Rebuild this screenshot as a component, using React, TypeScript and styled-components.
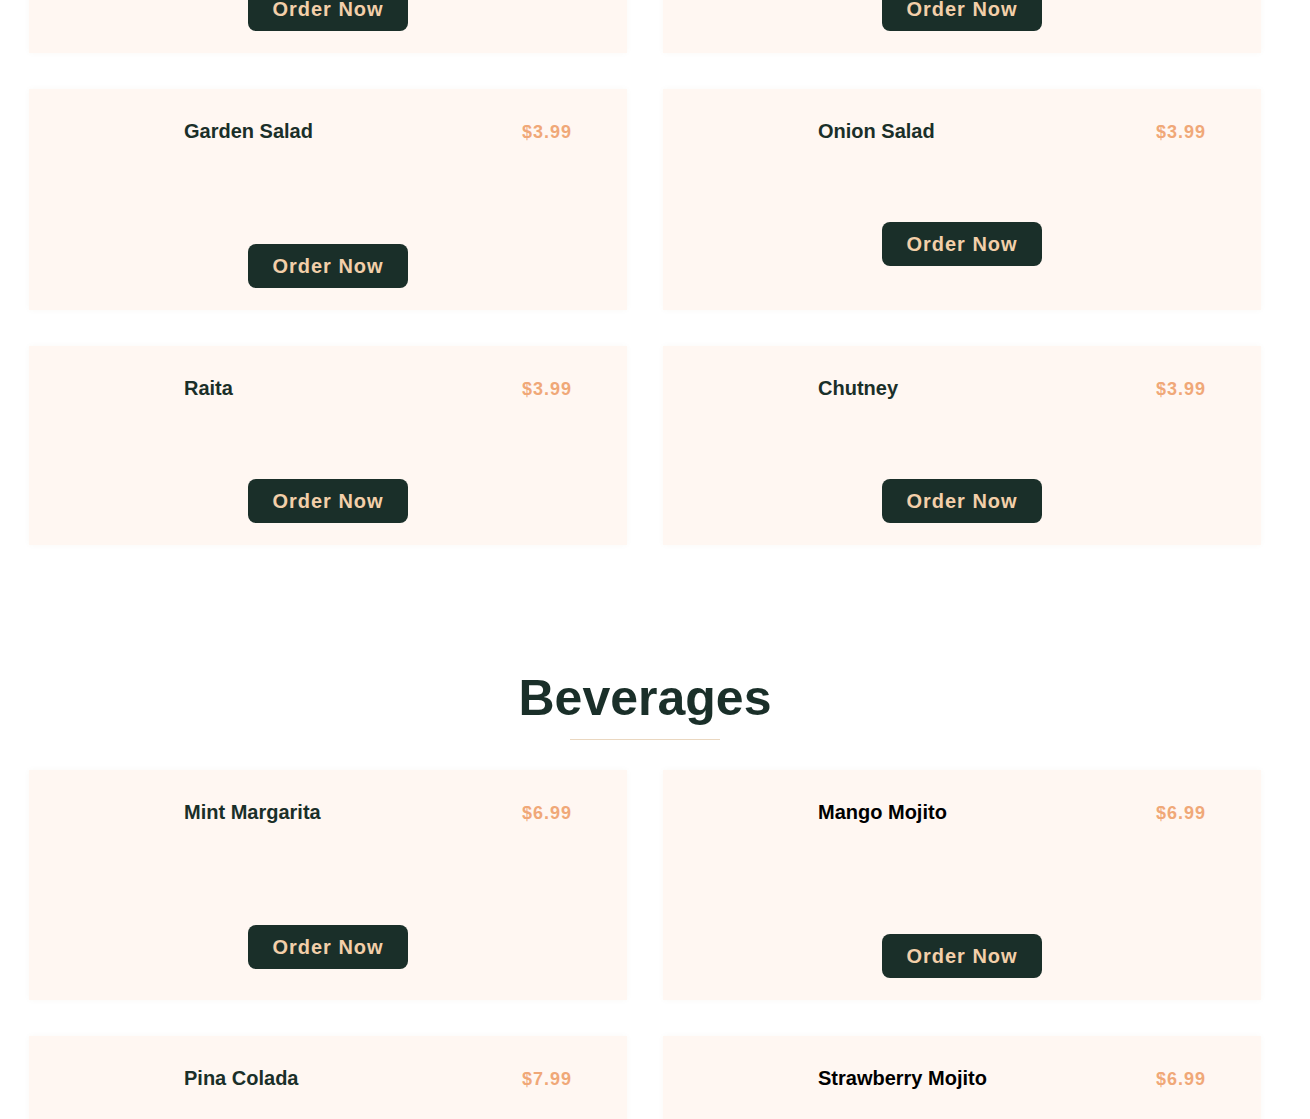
import React from "react";
import styled, { createGlobalStyle } from "styled-components";

const GlobalStyle = createGlobalStyle`
  html, body {
    margin: 0;
    padding: 0;
    background: #ffffff;
    font-family: "Liberation Sans", Arial, sans-serif;
    overflow: hidden;
  }
`;

const Page = styled.main`
  width: 1232px;
  padding: 0 49px 0 29px;
`;

const Section = styled.section<{ $first?: boolean }>`
  display: flex;
  flex-direction: column;
  margin-top: ${(p) => (p.$first ? "-146px" : "123px")};
`;

const Heading = styled.h2`
  margin: 0;
  font-size: 50px;
  line-height: 60px;
  font-weight: 700;
  color: #1a2f29;
  text-align: center;
`;

const Rule = styled.div`
  width: 150px;
  height: 1px;
  background: #ead7c0;
  margin: 11px auto 30px;
`;

const Grid = styled.div`
  display: grid;
  grid-template-columns: 598px 598px;
  column-gap: 36px;
  row-gap: 36px;
`;

const Card = styled.article`
  display: flex;
  flex-direction: column;
  background: #fff7f2;
  box-shadow: 0 0 6px rgba(120, 90, 60, 0.04);
  padding: 30px 0 22px;
`;

const Header = styled.div`
  display: flex;
  align-items: baseline;
  justify-content: space-between;
  height: 24px;
  overflow: visible;
  padding: 0 55px 0 155px;
`;

const Name = styled.h3<{ $black?: boolean }>`
  margin: 0;
  font-size: 20px;
  line-height: 24px;
  font-weight: 700;
  color: ${(p) => (p.$black ? "#000000" : "#1a2f29")};
`;

const Price = styled.span`
  font-size: 18px;
  line-height: 24px;
  font-weight: 700;
  letter-spacing: 1px;
  color: #f0a878;
`;

const Spacer = styled.div<{ $h: number }>`
  height: ${(p) => p.$h}px;
`;

const OrderButton = styled.button`
  align-self: center;
  width: 160px;
  height: 44px;
  border: none;
  border-radius: 8px;
  background: #1a2f29;
  color: #f3cfa9;
  font-family: "Liberation Sans", Arial, sans-serif;
  font-size: 20px;
  font-weight: 700;
  letter-spacing: 1px;
  cursor: pointer;
`;

type Item = { name: string; price: string; gap: number; black?: boolean };

const MenuCard = ({ item }: { item: Item }) => (
  <Card>
    <Header>
      <Name $black={item.black}>{item.name}</Name>
      <Price>{item.price}</Price>
    </Header>
    <Spacer $h={item.gap} />
    <OrderButton>Order Now</OrderButton>
  </Card>
);

const sides: Item[] = [
  { name: "Green Salad", price: "$3.99", gap: 79 },
  { name: "Cucumber Salad", price: "$3.99", gap: 79 },
  { name: "Garden Salad", price: "$3.99", gap: 101 },
  { name: "Onion Salad", price: "$3.99", gap: 79 },
  { name: "Raita", price: "$3.99", gap: 79 },
  { name: "Chutney", price: "$3.99", gap: 79 },
];

const beverages: Item[] = [
  { name: "Mint Margarita", price: "$6.99", gap: 101 },
  { name: "Mango Mojito", price: "$6.99", gap: 110, black: true },
  { name: "Pina Colada", price: "$7.99", gap: 101 },
  { name: "Strawberry Mojito", price: "$6.99", gap: 101, black: true },
];

export default function App() {
  return (
    <>
      <GlobalStyle />
      <Page>
        <Section $first>
          <Grid>
            {sides.map((it) => (
              <MenuCard key={it.name} item={it} />
            ))}
          </Grid>
        </Section>
        <Section>
          <Heading>Beverages</Heading>
          <Rule />
          <Grid>
            {beverages.map((it) => (
              <MenuCard key={it.name} item={it} />
            ))}
          </Grid>
        </Section>
      </Page>
    </>
  );
}
